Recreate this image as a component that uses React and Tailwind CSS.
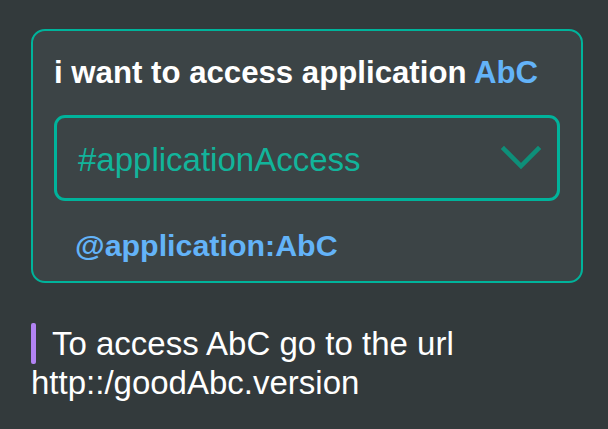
import React from 'react';

const Chevron = () => (
  <svg width="40" height="26" viewBox="0 0 40 26" fill="none">
    <path d="M3 4L20 21L37 4" stroke="#0e8f79" strokeWidth="4.5" strokeLinecap="square" />
  </svg>
);

const App = () => {
  return (
    <div
      className="w-[608px] h-[429px] bg-[#333a3c] pt-[29px] pl-[31px] overflow-hidden"
      style={{ fontFamily: '"Liberation Sans", Arial, sans-serif' }}
    >
      {/* card */}
      <div className="w-[552px] h-[254px] rounded-[14px] border-2 border-[#00b39b] bg-[#3c4446] px-[21px] pt-[24px]">
        <h1 className="text-[31.2px] leading-[36px] font-bold text-white">
          i want to access application <span className="text-[#63b3f8]">AbC</span>
        </h1>

        <div className="mt-[24px] h-[86px] rounded-[11px] border-[3px] border-[#00b39b] flex items-center justify-between pl-[21px] pr-[16px]">
          <span className="text-[33px] leading-[36px] text-[#12b49b] pt-[4px]">#applicationAccess</span>
          <Chevron />
        </div>

        <div className="mt-[26px] pl-[21px] text-[30.4px] leading-[36px] font-bold text-[#63b3f8]">
          @application:AbC
        </div>
      </div>

      {/* note */}
      <p className="mt-[40px] w-[540px] text-[33px] leading-[38px] text-white">
        <span className="inline-block align-[-9px] w-[5px] h-[41px] rounded-[2px] bg-[#b283f3] mr-[16px]" />
        To access AbC go to the url http::/goodAbc.version
      </p>
    </div>
  );
};

export default App;
